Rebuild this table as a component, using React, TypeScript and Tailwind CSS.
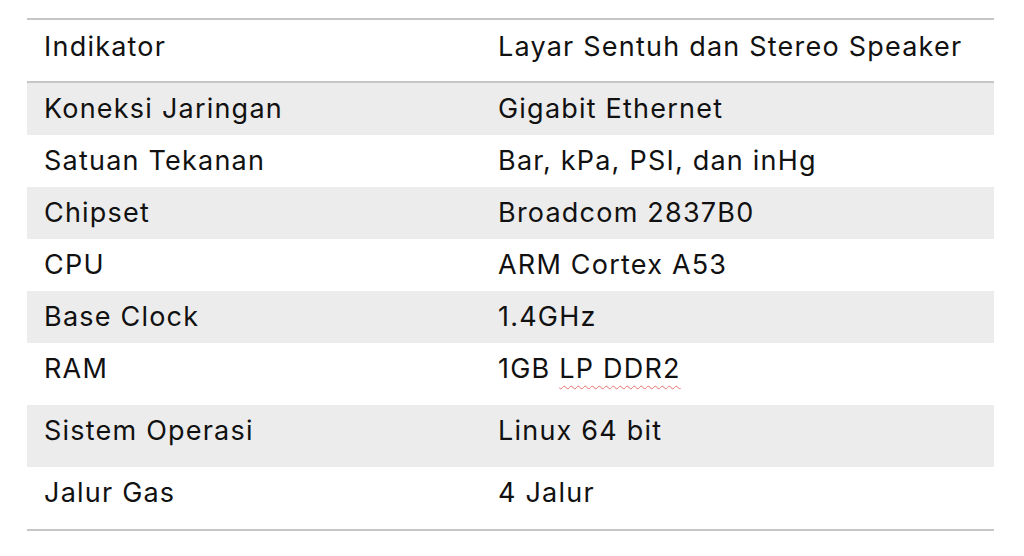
const rows: { label: string; value: React.ReactNode; tall?: boolean }[] = [
  { label: "Koneksi Jaringan", value: "Gigabit Ethernet" },
  { label: "Satuan Tekanan", value: "Bar, kPa, PSI, dan inHg" },
  { label: "Chipset", value: "Broadcom 2837B0" },
  { label: "CPU", value: "ARM Cortex A53" },
  { label: "Base Clock", value: "1.4GHz" },
  {
    label: "RAM",
    value: (
      <>
        1GB{" "}
        <span className="underline decoration-wavy decoration-[#e8736b] decoration-1 underline-offset-[7px]">
          LP DDR2
        </span>
      </>
    ),
    tall: true,
  },
  { label: "Sistem Operasi", value: "Linux 64 bit", tall: true },
  { label: "Jalur Gas", value: "4 Jalur", tall: true },
];

export default function App() {
  return (
    <div className="w-[1024px] h-[556px] bg-white pt-[18px] pl-[27px] font-['Inter',sans-serif] text-[27px] leading-[30px] tracking-[0.045em] text-[#111]">
      <div className="w-[967px] border-y-2 border-[#c6c6c6]">
        <div className="flex border-b-2 border-[#c6c6c6] pt-[12px] pb-[19px]">
          <div className="w-[454px] pl-[17px]">Indikator</div>
          <div className="flex-1 pl-[17px]">Layar Sentuh dan Stereo Speaker</div>
        </div>
        {rows.map((r, i) => (
          <div
            key={r.label}
            className={`flex ${i % 2 === 0 ? "bg-[#ececec]" : ""} ${r.tall ? "pt-[11px] pb-[21px]" : "pt-[11px] pb-[11px]"}`}
          >
            <div className="w-[454px] pl-[17px]">{r.label}</div>
            <div className="flex-1 pl-[17px]">{r.value}</div>
          </div>
        ))}
      </div>
    </div>
  );
}
